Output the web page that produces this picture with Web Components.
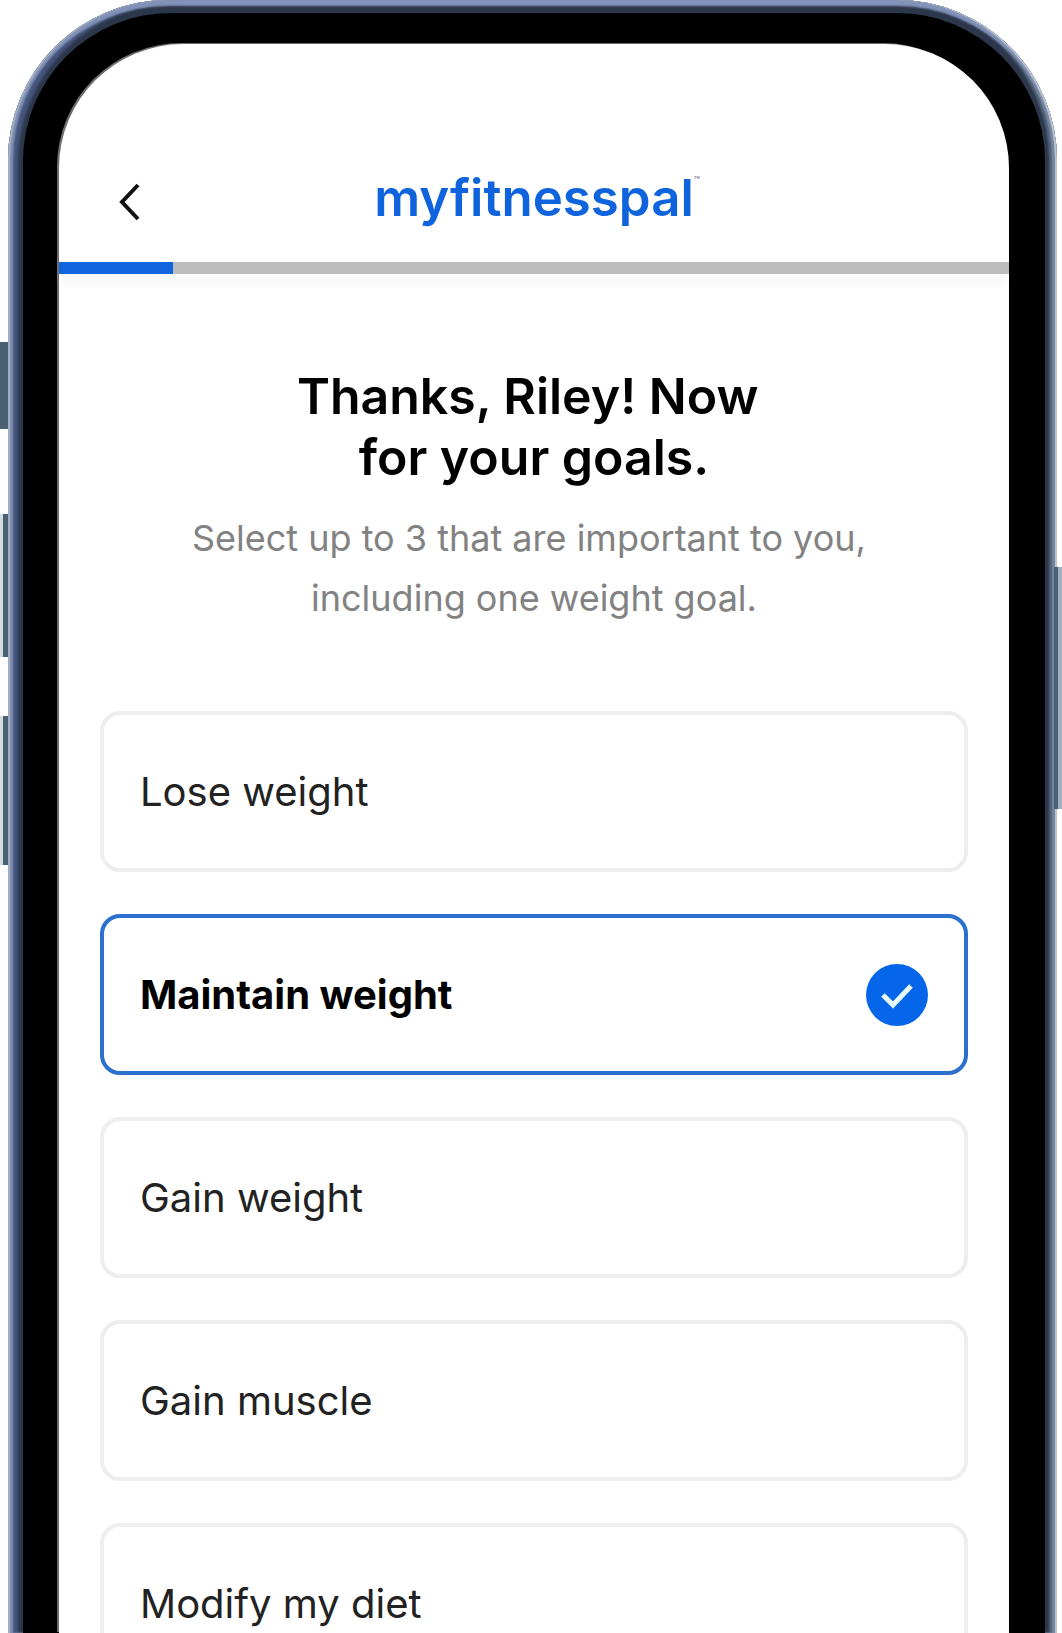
<!DOCTYPE html>
<html lang="en">
<head>
<meta charset="utf-8">
<title>myfitnesspal – Goals</title>
<style>
  html, body { margin: 0; height: 100%; background: #fff; }
  body { font-family: Inter, "Liberation Sans", sans-serif; color: #000; overflow: hidden; }
</style>
</head>
<body>
<phone-frame>
  <app-header progress="12">myfitnesspal</app-header>
  <goal-intro>
    <span slot="title">Thanks, Riley! Now&nbsp;<br>for your goals.</span>
    <span slot="hint">Select up to 3 that are important to you,&nbsp;<br>including one weight goal.</span>
  </goal-intro>
  <goal-list>
    <goal-option>Lose weight</goal-option>
    <goal-option checked>Maintain weight</goal-option>
    <goal-option>Gain weight</goal-option>
    <goal-option>Gain muscle</goal-option>
    <goal-option>Modify my diet</goal-option>
  </goal-list>
</phone-frame>

<script>
class BaseElement extends HTMLElement {
  constructor() {
    super();
    this.attachShadow({ mode: 'open' }).innerHTML = this.constructor.markup;
  }
}

customElements.define('phone-frame', class extends BaseElement {
  static markup = `
    <style>
      :host { display: block; position: relative; box-sizing: border-box; height: 100vh; padding: 0 5px 0 8px; overflow: hidden; }
      .metal { position: relative; box-sizing: border-box; height: 100%; padding: 13px 12px 0 15px;
        border-radius: 160px 160px 0 0; background: #2c374b;
        box-shadow: inset 2px 0 0 #a3aebc, inset -2px 0 0 #bcc4cb, inset 0 6px 2px #8292b8, inset 5px 0 2px #7f90b3, inset -5px 0 1px #7484a3, inset 10px 3px 3px #46557c, inset -8px 0 2px #536379; }
      .bezel { box-sizing: border-box; height: 100%; padding: 31px 36px 0 36px; border-radius: 148px 148px 0 0; background: #000; }
      .screen { box-sizing: border-box; height: 100%; overflow: hidden; border-radius: 124px 124px 0 0; background: #fff;
        box-shadow: -2px -1px 0 #706d6b; }
      i { position: absolute; width: 8px; background: #4a6074; }
      .mute { left: 0; top: 342px; height: 87px; }
      .up { left: 0; top: 514px; height: 143px; }
      .down { left: 0; top: 716px; height: 149px; }
      .up, .down { box-sizing: border-box; border-left: 3px solid #d3dbde; }
      .power { right: 0; top: 567px; height: 242px; box-sizing: border-box; border-right: 4px solid #a3b0bb; }
    </style>
    <i class="mute"></i><i class="up"></i><i class="down"></i>
    <div class="metal"><div class="bezel"><div class="screen"><slot></slot></div></div></div>
    <i class="power"></i>`;
});

customElements.define('app-header', class extends BaseElement {
  static markup = `
    <style>
      :host { display: block; }
      .bar { display: grid; grid-template-columns: 1fr auto 1fr; align-items: center; padding: 124px 48px 34px; height: 60px; }
      button { justify-self: start; display: flex; padding: 14px 9px 6px; border: 0; background: none; cursor: pointer; }
      .brand { position: relative; color: #0f63dc; font-size: 51px; line-height: 60px; font-weight: 600; }
      sup { position: absolute; left: 100%; top: 8px; font-size: 10px; line-height: 8px; font-weight: 500; color: #7d7f9c; }
      progress { display: block; width: 100%; height: 12px; border: 0; appearance: none; background: #bdbdbd; box-shadow: 0 10px 10px #f7f7f7; }
      progress::-webkit-progress-bar { background: #bdbdbd; }
      progress::-webkit-progress-value { background: #1065de; }
    </style>
    <div class="bar">
      <button aria-label="Back">
        <svg width="26" height="40" viewBox="0 0 26 40" fill="none" stroke="#111" stroke-width="4"><path d="M22 3 6 20l16 17"/></svg>
      </button>
      <div class="brand"><slot></slot><sup>™</sup></div>
    </div>
    <progress max="100" aria-label="Sign-up progress"></progress>`;
  connectedCallback() {
    this.shadowRoot.querySelector('progress').value = Number(this.getAttribute('progress'));
  }
});

customElements.define('goal-intro', class extends BaseElement {
  static markup = `
    <style>
      :host { display: block; padding: 92px 40px 0; text-align: center; }
      h1 { margin: 0; font-size: 50px; line-height: 61px; font-weight: 600; }
      p { margin: 20px 0 0; font-size: 36px; line-height: 60px; color: #828282; }
    </style>
    <h1><slot name="title"></slot></h1>
    <p><slot name="hint"></slot></p>`;
});

customElements.define('goal-list', class extends BaseElement {
  static markup = `
    <style>
      :host { display: flex; flex-direction: column; gap: 42px; padding: 83px 41px 40px; }
    </style>
    <slot></slot>`;
});

customElements.define('goal-option', class extends BaseElement {
  static markup = `
    <style>
      :host { display: block; }
      label { display: flex; align-items: center; justify-content: space-between; box-sizing: border-box; height: 161px;
        padding: 0 36px; border: 4px solid #eee; border-radius: 20px; font-size: 40px; line-height: 48px; color: #222; cursor: pointer; }
      input { position: absolute; opacity: 0; margin: 0; }
      svg { display: none; }
      label:has(input:checked) { border-color: #2a70cc; font-weight: 700; color: #000; }
      input:checked ~ svg { display: block; }
    </style>
    <label>
      <input type="checkbox">
      <span><slot></slot></span>
      <svg width="62" height="62" viewBox="0 0 62 62"><circle cx="31" cy="31" r="31" fill="#0566ea"/><path d="m17 31 10 10 18-19" fill="none" stroke="#e9fbff" stroke-width="5"/></svg>
    </label>`;
  connectedCallback() {
    this.shadowRoot.querySelector('input').checked = this.hasAttribute('checked');
  }
});
</script>
</body>
</html>
